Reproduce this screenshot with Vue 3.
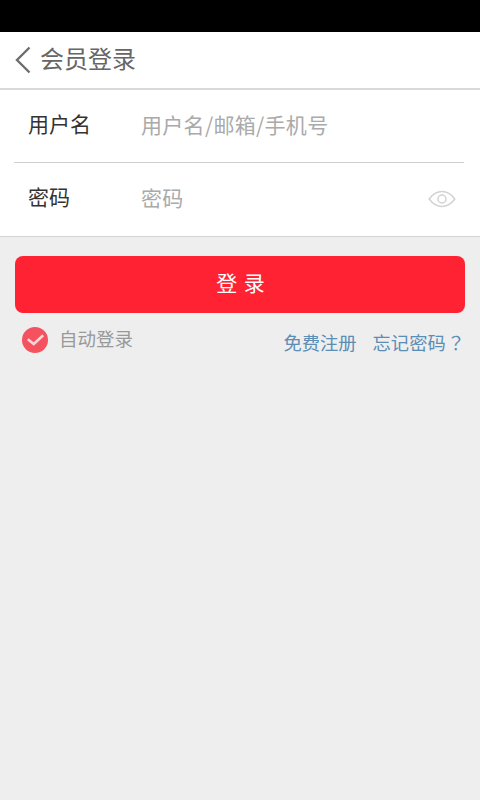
<template>
  <div class="page">
    <div class="status-bar"></div>

    <header class="top-bar">
      <svg class="back-icon" width="18" height="28" viewBox="0 0 18 28">
        <path d="M15.500 1.500 3 14l12.500 12.500" fill="none" stroke="#6e6e6e" stroke-width="2.400" />
      </svg>
      <span class="top-title">会员登录</span>
    </header>

    <section class="form">
      <div class="form-row first-row">
        <label class="row-label">用户名</label>
        <input class="row-input" placeholder="用户名/邮箱/手机号" />
      </div>
      <div class="form-row">
        <label class="row-label">密码</label>
        <input class="row-input" placeholder="密码" />
        <svg class="eye-icon" width="28" height="20" viewBox="0 0 28 20">
          <path d="M1.200 10C5 4.800 9.200 2.600 14 2.600S23 4.800 26.800 10C23 15.200 18.800 17.400 14 17.400S5 15.200 1.200 10Z" fill="none" stroke="#d2d2d2" stroke-width="1.500" />
          <circle cx="14" cy="10" r="4" fill="none" stroke="#d2d2d2" stroke-width="1.500" />
        </svg>
      </div>
    </section>

    <main class="content">
      <button class="login-button">登 录</button>
      <div class="options">
        <div class="auto-login">
          <svg class="check-icon" width="28" height="28" viewBox="0 0 28 28">
            <circle cx="14" cy="14" r="13" fill="#f4525f" />
            <path d="M6.800 13.300l6 4.700 9.400-8.700" fill="none" stroke="#f9d3d7" stroke-width="2.600" />
          </svg>
          <span class="auto-text">自动登录</span>
        </div>
        <div class="links">
          <a class="link">免费注册</a>
          <a class="link">忘记密码<span class="question">？</span></a>
        </div>
      </div>
    </main>
  </div>
</template>

<script setup>
</script>

<style>
html,
body {
  margin: 0;
  background: #eeeeee;
}
</style>

<style scoped>
.page {
  display: flex;
  flex-direction: column;
  width: 480px;
  height: 800px;
  overflow: hidden;
  background: #eeeeee;
  font-family: "Noto Sans CJK SC", "Noto Sans", sans-serif;
}

.status-bar {
  height: 32px;
  background: #000;
}

.top-bar {
  display: flex;
  align-items: center;
  box-sizing: border-box;
  height: 58px;
  padding-left: 14px;
  background: #fff;
  border-bottom: 2px solid #d9d9d9;
}

.back-icon {
  margin-right: 8px;
}

.top-title {
  margin-bottom: 4px;
  font-size: 24px;
  line-height: 1;
  color: #666;
}

.form {
  padding: 0 16px 0 14px;
  background: #fff;
  border-bottom: 1px solid #d4d4d4;
}

.form-row {
  display: flex;
  align-items: center;
  box-sizing: border-box;
  height: 73px;
  padding-left: 14px;
}

.first-row {
  border-bottom: 1px solid #cfcfcf;
}

.row-label {
  width: 113px;
  margin-bottom: 6px;
  font-size: 21px;
  line-height: 1;
  color: #333;
}

.row-input {
  flex: 1;
  min-width: 0;
  padding: 0;
  margin-bottom: 5px;
  border: none;
  outline: none;
  background: transparent;
  font-family: inherit;
  font-size: 21px;
  letter-spacing: 0.3px;
}

.row-input::placeholder {
  color: #aaa;
}

.eye-icon {
  margin-right: 8px;
  margin-bottom: 2px;
}

.content {
  flex: 1;
  padding: 19px 15px 0;
}

.login-button {
  display: block;
  width: 450px;
  height: 57px;
  padding: 0 0 6px 2px;
  border: none;
  border-radius: 8px;
  background: #ff2233;
  color: #fff;
  font-family: inherit;
  font-size: 21px;
  letter-spacing: 1px;
}

.options {
  display: flex;
  justify-content: space-between;
  padding-top: 13px;
}

.auto-login {
  display: flex;
  align-items: center;
  height: 28px;
  padding-left: 6px;
}

.check-icon {
  margin-right: 10px;
}

.auto-text {
  margin-bottom: 3px;
  font-size: 18.500px;
  line-height: 1;
  color: #999;
}

.links {
  display: flex;
  gap: 16px;
  padding-top: 6px;
}

.link {
  font-size: 18.300px;
  line-height: 1.200;
  color: #5b8db5;
}

.question {
  display: inline-block;
  margin-left: 1px;
  font-family: "Noto Sans CJK TC", sans-serif;
}
</style>
